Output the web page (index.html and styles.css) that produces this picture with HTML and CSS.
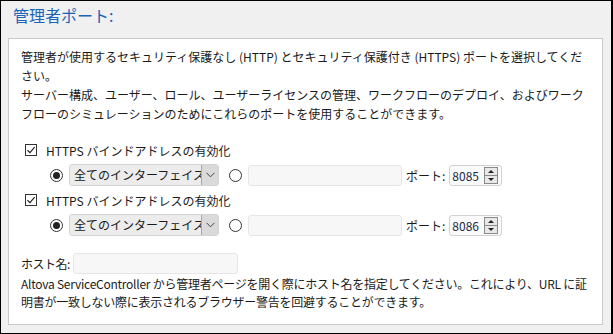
FILE: index.html
```html
<!DOCTYPE html>
<html lang="ja">
<head>
    <meta charset="UTF-8">
    <title>管理者ポート</title>
    <link rel="stylesheet" href="styles.css">
</head>
<body>
    <div class="frame">
        <h1 class="title">管理者ポート:</h1>

        <div class="box">
            <p class="desc">管理者が使用するセキュリティ保護なし (HTTP) とセキュリティ保護付き (HTTPS) ポートを選択してください。<br>サーバー構成、ユーザー、ロール、ユーザーライセンスの管理、ワークフローのデプロイ、およびワークフローのシミュレーションのためにこれらのポートを使用することができます。</p>

            <div class="bind">
                <label class="check-row">
                    <span class="checkbox">
                        <svg width="12" height="12" viewBox="0 0 12 12"><path d="M2.5 6.2 L5 8.6 L9.6 3.2" fill="none" stroke="#222" stroke-width="1.2"/></svg>
                    </span>
                    HTTPS バインドアドレスの有効化
                </label>
                <div class="addr-row">
                    <span class="radio on"></span>
                    <div class="select">
                        <span class="select-text">全てのインターフェイス</span>
                        <span class="select-btn">
                            <svg width="9" height="6" viewBox="0 0 9 6"><path d="M0.5 0.8 L4.5 4.8 L8.5 0.8" fill="none" stroke="#444" stroke-width="1"/></svg>
                        </span>
                    </div>
                    <span class="radio"></span>
                    <div class="text-input wide"></div>
                    <span class="port-label">ポート:</span>
                    <div class="spin">
                        <span class="spin-value">8085</span>
                        <span class="spin-btns"><i class="up"></i><i class="down"></i></span>
                    </div>
                </div>
            </div>

            <div class="bind">
                <label class="check-row">
                    <span class="checkbox">
                        <svg width="12" height="12" viewBox="0 0 12 12"><path d="M2.5 6.2 L5 8.6 L9.6 3.2" fill="none" stroke="#222" stroke-width="1.2"/></svg>
                    </span>
                    HTTPS バインドアドレスの有効化
                </label>
                <div class="addr-row">
                    <span class="radio on"></span>
                    <div class="select">
                        <span class="select-text">全てのインターフェイス</span>
                        <span class="select-btn">
                            <svg width="9" height="6" viewBox="0 0 9 6"><path d="M0.5 0.8 L4.5 4.8 L8.5 0.8" fill="none" stroke="#444" stroke-width="1"/></svg>
                        </span>
                    </div>
                    <span class="radio"></span>
                    <div class="text-input wide"></div>
                    <span class="port-label">ポート:</span>
                    <div class="spin">
                        <span class="spin-value">8086</span>
                        <span class="spin-btns"><i class="up"></i><i class="down"></i></span>
                    </div>
                </div>
            </div>

            <div class="host-row">
                <span class="host-label">ホスト名:</span>
                <div class="text-input host"></div>
            </div>
            <p class="host-note">Altova ServiceController から管理者ページを開く際にホスト名を指定してください。これにより、URL に証明書が一致しない際に表示されるブラウザー警告を回避することができます。</p>
        </div>
    </div>
</body>
</html>
```

FILE: styles.css
```css
* {
    margin: 0;
    padding: 0;
    box-sizing: border-box;
}

body {
    font-family: "Noto Sans CJK JP", "Noto Sans", sans-serif;
    font-size: 12px;
    color: #1a1a1a;
    background: #f0f0f0;
}

.frame {
    width: 613px;
    height: 334px;
    border: 1px solid #000;
    border-right-width: 2px;
    background: #f0f0f0;
    padding: 0 8px 0 7px;
}

.title {
    font-size: 16px;
    font-weight: normal;
    color: #1c63b7;
    line-height: 22px;
    padding: 3px 0 0 5px;
    height: 37px;
}

.box {
    background: white;
    border: 1px solid #cacaca;
    padding: 8px 12px 0 12px;
    height: 287px;
}

.desc {
    line-height: 19px;
}

.bind {
    padding-left: 4px;
}

.bind:first-of-type {
    margin-top: 17px;
}

.check-row {
    display: flex;
    align-items: center;
    gap: 9px;
    height: 20px;
    margin-bottom: 4px;
}

.bind + .bind .check-row {
    margin-top: 4px;
}

.checkbox {
    width: 12px;
    height: 12px;
    border: 1px solid #333;
    display: flex;
    align-items: center;
    justify-content: center;
}

.checkbox svg {
    display: block;
    flex: none;
}

.addr-row {
    display: flex;
    align-items: center;
    height: 22px;
    padding-left: 25px;
}

.radio {
    width: 13px;
    height: 13px;
    border: 1px solid #333;
    border-radius: 50%;
    display: flex;
    align-items: center;
    justify-content: center;
    flex: none;
}

.radio.on::after {
    content: "";
    width: 7px;
    height: 7px;
    border-radius: 50%;
    background: #222;
}

.select {
    display: flex;
    width: 150px;
    height: 22px;
    margin-left: 6px;
    margin-right: 10px;
    border: 1px solid #d4d4d4;
    border-radius: 3px;
    background: #ececec;
    overflow: hidden;
}

.select-text {
    flex: 1;
    overflow: hidden;
    white-space: nowrap;
    line-height: 20px;
    padding-left: 4px;
}

.select-btn {
    width: 17px;
    flex: none;
    background: #dadada;
    border-left: 1px solid #a8a8a8;
    display: flex;
    align-items: center;
    justify-content: center;
}

.text-input {
    height: 21px;
    background: #f7f7f7;
    border: 1px solid #e6e6e6;
    border-radius: 3px;
}

.text-input.wide {
    width: 154px;
    margin-left: 6px;
}

.port-label {
    margin-left: 4px;
    margin-right: 4px;
}

.spin {
    display: flex;
    align-items: center;
    width: 53px;
    height: 21px;
    border: 1px solid #d2d2d2;
    border-radius: 3px;
    background: #fafafa;
    padding-left: 2px;
}

.spin-value {
    flex: 1;
    color: #1b2a44;
}

.spin-btns {
    display: flex;
    flex-direction: column;
    width: 14px;
    height: 17px;
    margin-right: 3px;
    border: 1px solid #8a8a8a;
    background: #e8e8e8;
}

.spin-btns i {
    flex: 1;
    display: flex;
    align-items: center;
    justify-content: center;
}

.spin-btns .up {
    border-bottom: 1px solid #8a8a8a;
}

.spin-btns .up::after {
    content: "";
    border: 3px solid transparent;
    border-bottom: 3px solid #222;
    border-top: 0;
}

.spin-btns .down::after {
    content: "";
    border: 3px solid transparent;
    border-top: 3px solid #222;
    border-bottom: 0;
}

.host-row {
    display: flex;
    align-items: center;
    gap: 3px;
    margin-top: 17px;
    height: 21px;
}

.host-label {
    letter-spacing: -0.5px;
}

.text-input.host {
    width: 165px;
}

.host-note {
    line-height: 18px;
    margin-top: 1px;
    margin-right: -4px;
    letter-spacing: -0.25px;
}
```
